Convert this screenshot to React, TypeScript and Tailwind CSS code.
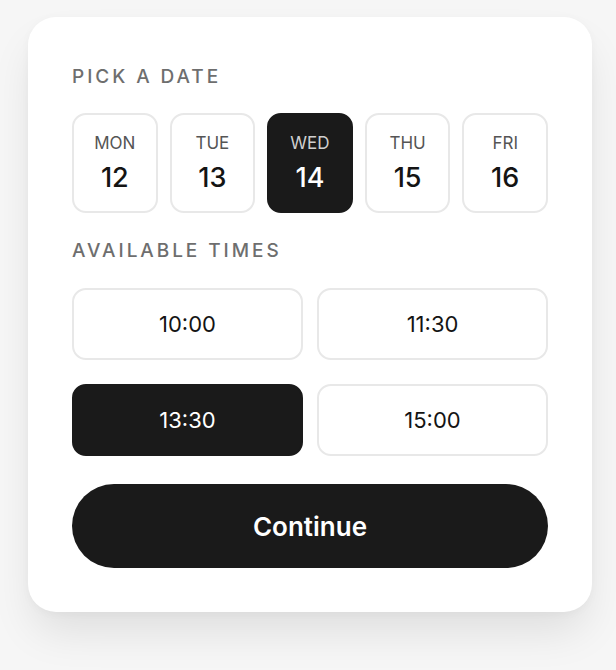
import React, { useState } from "react";

const days = [
  { d: "MON", n: "12" },
  { d: "TUE", n: "13" },
  { d: "WED", n: "14" },
  { d: "THU", n: "15" },
  { d: "FRI", n: "16" },
];
const times = ["10:00", "11:30", "13:30", "15:00"];

export default function App() {
  const [day, setDay] = useState("14");
  const [time, setTime] = useState("13:30");
  return (
    <div
      className="min-h-[670px] w-[616px] bg-[#f6f6f6] pt-[17px] pl-[28px]"
      style={{ fontFamily: 'Inter, "Liberation Sans", Arial, sans-serif' }}
    >
      <div className="w-[564px] rounded-[28px] bg-white px-[44px] pt-[48px] pb-[44px] shadow-[0_24px_44px_-6px_rgba(0,0,0,0.10),0_2px_10px_rgba(0,0,0,0.03)]">
        <div className="text-[19px] leading-[24px] font-medium tracking-[0.155em] text-[#6e6e6e]">
          PICK A DATE
        </div>
        <div className="mt-[24px] grid grid-cols-5 gap-3">
          {days.map((x) => {
            const sel = x.n === day;
            return (
              <button
                key={x.n}
                onClick={() => setDay(x.n)}
                className={
                  sel
                    ? "flex h-[100px] flex-col items-center justify-center gap-[10px] rounded-[14px] border-2 border-[#1a1a1a] bg-[#1a1a1a]"
                    : "flex h-[100px] flex-col items-center justify-center gap-[10px] rounded-[14px] border-2 border-[#e8e8e8] bg-white"
                }
              >
                <span
                  className={
                    sel
                      ? "text-[17px] leading-[20px] text-[#cfcfcf]"
                      : "text-[17px] leading-[20px] text-[#555555]"
                  }
                >
                  {x.d}
                </span>
                <span
                  className={
                    sel
                      ? "text-[27px] leading-[30px] font-medium text-white"
                      : "text-[27px] leading-[30px] font-medium text-[#141414]"
                  }
                >
                  {x.n}
                </span>
              </button>
            );
          })}
        </div>
        <div className="mt-[26px] text-[19px] leading-[24px] font-medium tracking-[0.155em] text-[#6e6e6e]">
          AVAILABLE TIMES
        </div>
        <div className="mt-[25px] grid grid-cols-2 gap-x-[14px] gap-y-[24px]">
          {times.map((t) => {
            const sel = t === time;
            return (
              <button
                key={t}
                onClick={() => setTime(t)}
                className={
                  sel
                    ? "flex h-[72px] items-center justify-center rounded-[14px] border-2 border-[#1a1a1a] bg-[#1a1a1a] text-[22px] font-normal text-white"
                    : "flex h-[72px] items-center justify-center rounded-[14px] border-2 border-[#e8e8e8] bg-white text-[22px] font-normal text-[#141414]"
                }
              >
                {t}
              </button>
            );
          })}
        </div>
        <button className="mt-[28px] flex h-[84px] w-full items-center justify-center rounded-full bg-[#1a1a1a] text-[26px] font-semibold text-white">
          Continue
        </button>
      </div>
    </div>
  );
}
